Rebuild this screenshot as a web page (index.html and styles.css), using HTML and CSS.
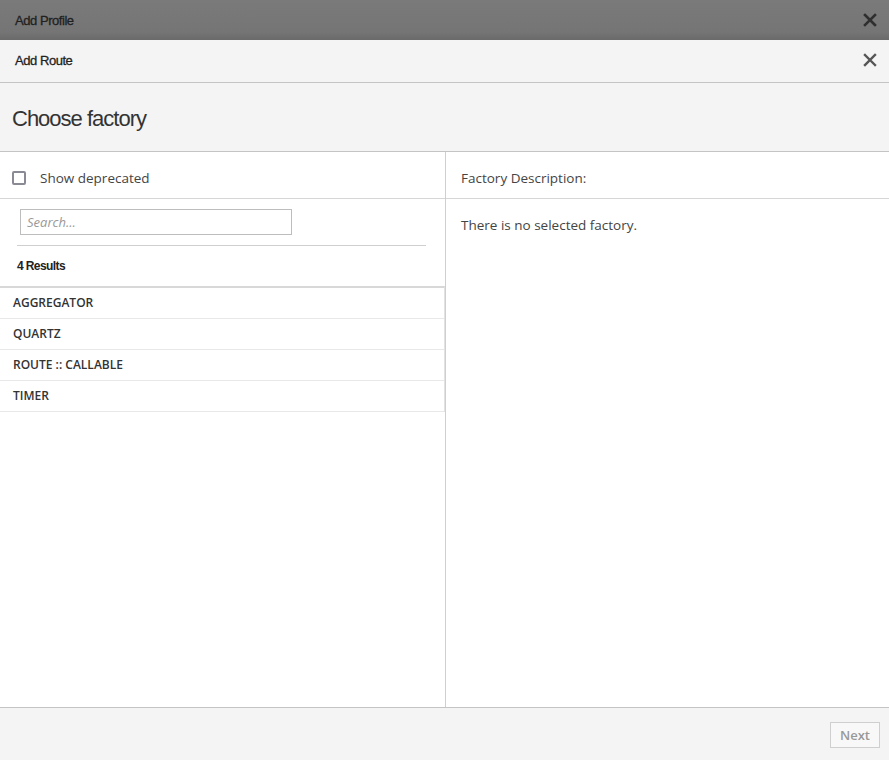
FILE: index.html
```html
<!DOCTYPE html>
<html>
<head>
<meta charset="utf-8">
<link rel="stylesheet" href="styles.css">
</head>
<body>
<div class="top-bar">
  <span class="bar-title">Add Profile</span>
  <svg class="close close-dark" width="14" height="14" viewBox="0 0 14 14"><path d="M2 2 L12 12 M12 2 L2 12" stroke="#2f2f2f" stroke-width="2.6" stroke-linecap="square"/></svg>
</div>
<div class="sub-bar">
  <span class="bar-title">Add Route</span>
  <svg class="close" width="14" height="14" viewBox="0 0 14 14"><path d="M2 2 L12 12 M12 2 L2 12" stroke="#555" stroke-width="2.4" stroke-linecap="square"/></svg>
</div>
<div class="header">
  <h1 class="title">Choose factory</h1>
</div>
<div class="main">
  <div class="left">
    <div class="row-head">
      <span class="checkbox"></span>
      <span class="label">Show deprecated</span>
    </div>
    <div class="search-area">
      <input class="search" type="text" placeholder="Search...">
      <div class="rule"></div>
      <div class="results">4 Results</div>
    </div>
    <ul class="list">
      <li>AGGREGATOR</li>
      <li>QUARTZ</li>
      <li>ROUTE :: CALLABLE</li>
      <li>TIMER</li>
    </ul>
  </div>
  <div class="right">
    <div class="row-head">
      <span class="label">Factory Description:</span>
    </div>
    <div class="desc">There is no selected factory.</div>
  </div>
</div>
<div class="footer">
  <button class="next">Next</button>
</div>
</body>
</html>
```
FILE: styles.css
```css
* { box-sizing: border-box; }
html, body { margin: 0; padding: 0; }
body {
  width: 889px;
  height: 760px;
  display: flex;
  flex-direction: column;
  background: #fff;
  font-family: "Open Sans", "Liberation Sans", sans-serif;
  color: #333;
  overflow: hidden;
}
.top-bar {
  height: 40px;
  flex: none;
  background: linear-gradient(#7a7a7a 0%, #757575 80%, #6a6a6a 100%);
  display: flex;
  align-items: center;
  justify-content: space-between;
  padding: 0 12px 0 15px;
}
.bar-title {
  font-family: "Liberation Sans", Arial, sans-serif;
  font-size: 13px;
  letter-spacing: -0.45px;
  color: #1f1f1f;
  -webkit-text-stroke: 0.3px #1f1f1f;
}
.close { display: block; }
.sub-bar {
  height: 43px;
  flex: none;
  background: #f4f4f4;
  border-bottom: 1px solid #c4c4c4;
  display: flex;
  align-items: center;
  justify-content: space-between;
  padding: 0 12px 2px 15px;
}
.header {
  height: 69px;
  flex: none;
  background: #f4f4f4;
  border-bottom: 1px solid #c4c4c4;
  display: flex;
  align-items: center;
  padding: 4px 12px 0;
}
.title {
  margin: 0;
  font-family: "Liberation Sans", Arial, sans-serif;
  font-weight: normal;
  font-size: 22px;
  letter-spacing: -1px;
  color: #333;
}
.main {
  flex: 1;
  display: flex;
  min-height: 0;
}
.left {
  width: 446px;
  flex: none;
  border-right: 1px solid #cfcfcf;
  display: flex;
  flex-direction: column;
}
.right {
  flex: 1;
  display: flex;
  flex-direction: column;
}
.row-head {
  height: 47px;
  flex: none;
  border-bottom: 1px solid #d6d6d6;
  display: flex;
  align-items: center;
  padding: 6px 12px 0 12px;
}
.right .row-head { padding-left: 15px; }
.checkbox {
  width: 14px;
  height: 14px;
  border: 2px solid #8a8a94;
  border-radius: 2px;
  margin-right: 14px;
  flex: none;
}
.label {
  font-size: 13.5px;
  color: #444;
}
.search-area {
  padding: 10px 20px 0 17px;
}
.search {
  display: block;
  margin-left: 3px;
  width: 272px;
  height: 26px;
  border: 1px solid #bdbdbd;
  padding: 0 6px;
  font-family: "Open Sans", sans-serif;
  font-size: 13px;
  outline: none;
}
.search::placeholder {
  color: #999;
  font-style: italic;
}
.rule {
  margin-top: 10px;
  width: 409px;
  height: 1px;
  background: #cfcfcf;
}
.results {
  height: 40px;
  display: flex;
  align-items: center;
  font-family: "Liberation Sans", Arial, sans-serif;
  font-weight: bold;
  font-size: 12px;
  letter-spacing: -0.6px;
  color: #222;
  padding-bottom: 1px;
}
.list {
  list-style: none;
  margin: 0;
  padding: 0;
  border-top: 2px solid #d8d8d8;
  border-right: 1px solid #e2e2e2;
}
.list li {
  height: 31px;
  border-bottom: 1px solid #e8e8e8;
  display: flex;
  align-items: center;
  padding: 0 13px 1px;
  font-size: 12px;
  font-weight: 600;
  color: #333;
}
.desc {
  padding: 17px 15px;
  font-size: 13.5px;
  color: #444;
}
.footer {
  height: 53px;
  flex: none;
  background: #f4f4f4;
  border-top: 1px solid #c4c4c4;
  display: flex;
  align-items: flex-start;
  justify-content: flex-end;
  padding: 14px 9px 0 0;
}
.next {
  width: 50px;
  height: 26px;
  background: #f8f8f8;
  border: 1px solid #cfcfcf;
  font-family: "Open Sans", sans-serif;
  font-size: 13px;
  font-weight: 600;
  color: #999;
  padding: 0;
}
```
